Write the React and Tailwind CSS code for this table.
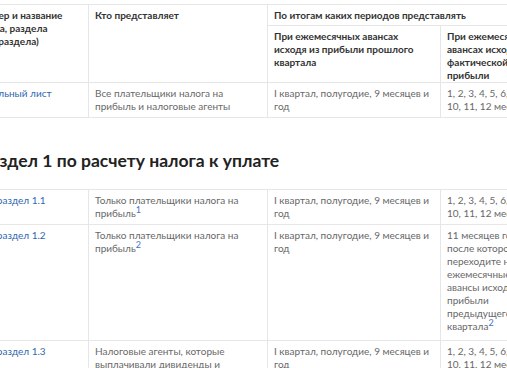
import React from "react";

const font = { fontFamily: "Lato, 'Open Sans', sans-serif" };

function Sup({ n }) {
  return <sup className="text-[9px] text-[#3b73c4]">{n}</sup>;
}

function Cols() {
  return (
    <colgroup>
      <col className="w-[117px]" />
      <col className="w-[179px]" />
      <col className="w-[173px]" />
      <col className="w-[104px]" />
    </colgroup>
  );
}

const th = "border border-[#e6e6e6] px-[6px] pt-[4px] pb-[3px] text-left align-top font-bold text-[#333]";
const th2 = "border border-[#e6e6e6] pl-[6px] pt-[4px] pb-0 text-left align-top font-bold text-[#333]";
const td = "border border-[#e6e6e6] px-[6px] pt-[4px] pb-[4px] text-left align-top text-[#686868]";
const link = "text-[#2f68b0]";

function Months() {
  return (
    <span className="whitespace-nowrap">
      1, 2, 3, 4, 5, 6, 7, 8, 9,
      <br />
      10, 11, 12 месяцев
    </span>
  );
}

export default function App() {
  return (
    <div className="w-[507px] h-[368px] overflow-hidden bg-white" style={font}>
      <div className="ml-[-29px] pt-[4px] text-[10px] leading-[13px]">
        <table className="table-fixed border-collapse w-[573px]">
          <Cols />
          <thead>
            <tr>
              <th rowSpan={2} className={th}>
                Номер и название листа, раздела (подраздела)
              </th>
              <th rowSpan={2} className={th}>Кто представляет</th>
              <th colSpan={2} className={th}>По итогам каких периодов представлять</th>
            </tr>
            <tr>
              <th className={`${th2} pr-[14px]`}>
                При ежемесячных авансах исходя из прибыли прошлого квартала
              </th>
              <th className={`${th2} pr-[6px]`}>
                При ежемесячных
                <br />
                авансах исходя из
                <br />
                фактической
                <br />
                прибыли
              </th>
            </tr>
          </thead>
          <tbody>
            <tr>
              <td className={td}>
                <span className={link}>Титульный лист</span>
              </td>
              <td className={td}>Все плательщики налога на прибыль и налоговые агенты</td>
              <td className={td}>I квартал, полугодие, 9 месяцев и год</td>
              <td className={td}>
                <Months />
              </td>
            </tr>
          </tbody>
        </table>

        <h2 className="ml-[9px] mt-[33px] mb-[18px] text-[17.5px] leading-[20px] font-bold text-[#222]">
          Раздел 1 по расчету налога к уплате
        </h2>

        <table className="table-fixed border-collapse w-[573px]">
          <Cols />
          <tbody>
            <tr>
              <td className={td}>
                <span className={link}>Подраздел 1.1</span>
              </td>
              <td className={td}>
                Только плательщики налога на прибыль
                <Sup n="1" />
              </td>
              <td className={td}>I квартал, полугодие, 9 месяцев и год</td>
              <td className={td}>
                <Months />
              </td>
            </tr>
            <tr>
              <td className={td}>
                <span className={link}>Подраздел 1.2</span>
              </td>
              <td className={td}>
                Только плательщики налога на прибыль
                <Sup n="2" />
              </td>
              <td className={td}>I квартал, полугодие, 9 месяцев и год</td>
              <td className={`${td} pb-[7px]`}>
                11 месяцев года,
                <br />
                после которого
                <br />
                переходите на
                <br />
                ежемесячные
                <br />
                авансы исходя из
                <br />
                прибыли
                <br />
                предыдущего
                <br />
                квартала
                <Sup n="2" />
              </td>
            </tr>
            <tr>
              <td className={td}>
                <span className={link}>Подраздел 1.3</span>
              </td>
              <td className={td}>Налоговые агенты, которые выплачивали дивиденды и проценты</td>
              <td className={td}>I квартал, полугодие, 9 месяцев и год</td>
              <td className={td}>
                <Months />
              </td>
            </tr>
          </tbody>
        </table>
      </div>
    </div>
  );
}
